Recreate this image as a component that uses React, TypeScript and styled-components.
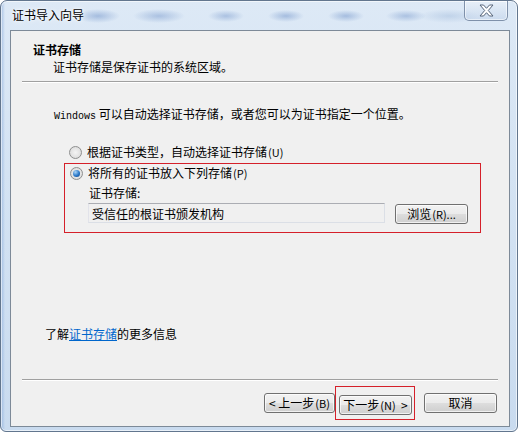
import React, { useState } from 'react';
import styled, { createGlobalStyle } from 'styled-components';

const Global = createGlobalStyle`
  html, body { margin: 0; padding: 0; background: #ffffff; }
  body {
    width: 521px; height: 434px; overflow: hidden;
    font-family: "Noto Sans CJK SC", "DejaVu Sans", sans-serif;
    font-size: 12px; color: #000;
  }
`

export default () => {
  let [choice, setChoice] = useState<'auto' | 'manual'>('manual');

  return <>
    <Global />
    <Window>
      <TitleBar>
        <Title>证书导入向导</Title>
        <CloseButton>
          <svg width='17' height='13' viewBox='0 0 17 13'>
            <path d='M2 1h3.5l3 3.3 3-3.3H15l-4.7 5.5L15 12h-3.5l-3-3.3-3 3.3H2l4.7-5.5z'
              fill='#fff' stroke='#56657a' strokeWidth='1' strokeLinejoin='round' />
          </svg>
        </CloseButton>
      </TitleBar>
      <Client>
        <Header>
          <Heading>证书存储</Heading>
          <SubHeading>证书存储是保存证书的系统区域。</SubHeading>
        </Header>
        <Rule />
        <Body>
          <Intro><Latin>Windows</Latin> 可以自动选择证书存储，或者您可以为证书指定一个位置。</Intro>
          <RadioRow onClick={() => setChoice('auto')}>
            <Radio checked={choice === 'auto'} />
            <span>根据证书类型，自动选择证书存储<Key>(U)</Key></span>
          </RadioRow>
          <Mark>
            <RadioRow onClick={() => setChoice('manual')}>
              <Radio checked={choice === 'manual'} />
              <span>将所有的证书放入下列存储<Key>(P)</Key></span>
            </RadioRow>
            <StoreLabel>证书存储:</StoreLabel>
            <StoreRow>
              <StoreInput readOnly value='受信任的根证书颁发机构' />
              <Button width={73}>浏览<Key>(R)...</Key></Button>
            </StoreRow>
          </Mark>
          <Learn>了解<a href='#'>证书存储</a>的更多信息</Learn>
        </Body>
        <Rule />
        <Footer>
          <Button width={71}>&lt;&nbsp;上一步<Key>(B)</Key></Button>
          <NextMark>
            <Button width={73}>下一步<Key>(N)</Key>&nbsp;&nbsp;&gt;</Button>
          </NextMark>
          <Button width={73} className='cancel'>取消</Button>
        </Footer>
      </Client>
    </Window>
  </>
}

const Window = styled.div`
  box-sizing: border-box;
  width: 518px; height: 432px;
  border: 1px solid #62768e;
  border-radius: 7px 7px 6px 6px;
  padding: 0 7px 4px 9px;
  display: flex; flex-direction: column;
  background:
    radial-gradient(ellipse 22px 7px at 97px 15px, rgba(110,145,200,.5), transparent),
    radial-gradient(ellipse 26px 7px at 158px 15px, rgba(110,145,200,.45), transparent),
    radial-gradient(ellipse 18px 6px at 225px 15px, rgba(110,145,200,.45), transparent),
    radial-gradient(ellipse 18px 6px at 285px 15px, rgba(110,145,200,.5), transparent),
    radial-gradient(ellipse 18px 6px at 345px 15px, rgba(110,145,200,.5), transparent),
    radial-gradient(ellipse 20px 6px at 405px 15px, rgba(110,145,200,.45), transparent),
    radial-gradient(ellipse 30px 7px at 448px 15px, rgba(140,170,210,.35), transparent),
    linear-gradient(90deg, rgba(120,160,215,.55) 0, transparent 4px),
    linear-gradient(180deg, #dde9f6 0%, #d4e3f3 40%, #c9dbef 100%);
  box-shadow: inset 0 0 0 1px rgba(255,255,255,.6);
`

const TitleBar = styled.div`
  height: 29px; flex: none;
  display: flex; align-items: flex-start;
`

const Title = styled.div`
  margin: 6px 0 0 2px;
  font-size: 12px; line-height: 16px;
  color: #000;
  text-shadow: 0 0 6px #fff, 0 0 3px #fff;
`

const CloseButton = styled.div`
  margin-left: auto; margin-right: 2px;
  width: 44px; height: 20px;
  box-sizing: border-box;
  border: 1px solid #7f91aa; border-top: none;
  border-radius: 0 0 5px 5px;
  background: linear-gradient(180deg, rgba(255,255,255,.3), rgba(190,208,232,.55));
  box-shadow: inset 0 0 0 1px rgba(255,255,255,.55);
  display: flex; align-items: center; justify-content: center;
`

const Client = styled.div`
  flex: 1;
  box-sizing: border-box;
  border: 1px solid #7d8a98;
  background: #f0f0f0;
  display: flex; flex-direction: column;
`

const Header = styled.div`
  padding: 11px 0 0 22px;
  line-height: 16px;
`

const Heading = styled.div`
  font-weight: bold;
`

const SubHeading = styled.div`
  margin: 1px 0 0 20px;
`

const Rule = styled.div`
  margin: 6px 11px 0;
  height: 1px;
  background: #a0a0a0;
  border-bottom: 1px solid #ffffff;
`

const Body = styled.div`
  flex: 1;
  display: flex; flex-direction: column;
  padding: 0 0 0 43px;
  line-height: 16px;
`

const Intro = styled.div`
  margin-top: 23px;
`

const Latin = styled.span`
  font-family: "Liberation Mono", monospace;
  font-size: 10px;
`

const Key = styled.span`
  font-size: 11px;
  margin-left: 1px;
`

const RadioRow = styled.label`
  display: flex; align-items: center; gap: 5px;
  margin: 19px 0 0 15px;
  cursor: default;
`

const Radio = styled.span<{ checked: boolean }>`
  width: 13px; height: 13px; box-sizing: border-box; flex: none;
  border-radius: 50%;
  border: 1px solid #8e8f8f;
  background: radial-gradient(circle at 50% 50%, #f4f4f4 0, #e2e2e2 60%, #d0d0d0 100%);
  position: relative;
  &::after {
    content: '';
    display: ${p => p.checked ? 'block' : 'none'};
    position: absolute; left: 2px; top: 2px;
    width: 7px; height: 7px; border-radius: 50%;
    background: radial-gradient(circle at 35% 30%, #a9d4f7 0, #2a78c8 55%, #0e3f82 100%);
  }
`

const Mark = styled.div`
  margin: 3px 0 0 10px;
  width: 417px; box-sizing: border-box;
  border: 1px solid #d5202a;
  padding: 0 0 8px 0;
  ${RadioRow} { margin: 1px 0 0 5px; }
`

const StoreLabel = styled.div`
  margin: 4px 0 0 24px;
`

const StoreRow = styled.div`
  display: flex; align-items: flex-start; gap: 10px;
  margin: 2px 0 0 23px;
`

const StoreInput = styled.input`
  box-sizing: border-box;
  width: 297px; height: 20px;
  margin: 0; padding: 0 3px;
  font: inherit; font-size: 12px; color: #000;
  background: #f0f0f0;
  border: 1px solid #dbdfe6;
  border-top-color: #abadb3;
  border-left-color: #e2e3ea;
  outline: none;
`

const Button = styled.button<{ width: number }>`
  box-sizing: border-box;
  width: ${p => p.width}px; height: 20px;
  margin: 0; padding: 0;
  font: inherit; font-size: 12px; line-height: 16px; color: #000;
  border: 1px solid #707070; border-radius: 3px;
  background: linear-gradient(180deg, #f2f2f2 0%, #ebebeb 48%, #dddddd 52%, #cfcfcf 100%);
  box-shadow: inset 0 0 0 1px rgba(255,255,255,.7);
  display: flex; align-items: center; justify-content: center;
  &.cancel { margin-left: 9px; }
  ${StoreRow} & { margin-top: 1px; }
`

const Learn = styled.div`
  margin: auto 0 31px -9px;
  a { color: #0066cc; text-decoration: underline; }
`

const Footer = styled.div`
  display: flex; align-items: center;
  justify-content: flex-end;
  padding: 5px 12px 6px 0;
`

const NextMark = styled.div`
  border: 1px solid #d5202a;
  padding: 8px 2px 4px 3px;
`
